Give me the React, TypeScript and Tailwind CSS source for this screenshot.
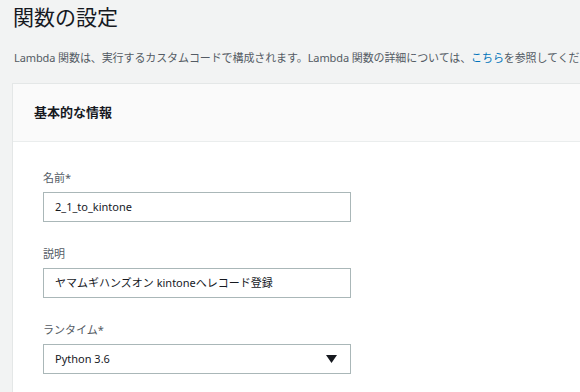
import React from "react";

const font = { fontFamily: '"Noto Sans", "Noto Sans CJK JP", sans-serif' };

function Label({ children }: { children: React.ReactNode }) {
  return <div className="h-[16px] leading-[16px] text-[11px] text-[#545b64]">{children}</div>;
}

function Field({ children, select }: { children: React.ReactNode; select?: boolean }) {
  return (
    <div className="mt-[6px] w-[308px] h-[30px] border border-[#aab7b8] bg-white flex items-center pl-[11px] pr-[13px] text-[11px] text-[#16191f]">
      <span className="flex-1">{children}</span>
      {select && (
        <svg width="11" height="8" viewBox="0 0 11 8">
          <path d="M0 0 H11 L5.5 8 Z" fill="#16191f" />
        </svg>
      )}
    </div>
  );
}

export default function App() {
  return (
    <div className="w-[580px] h-[392px] bg-[#f2f3f3] overflow-hidden" style={font}>
      <h1 className="pt-[3px] pl-[13px] text-[21px] leading-[28px] text-[#16191f] font-normal">関数の設定</h1>
      <p className="mt-[19px] pl-[14px] text-[11px] leading-[16px] text-[#545b64] whitespace-nowrap tracking-[-0.1px]">
        Lambda 関数は、実行するカスタムコードで構成されます。Lambda 関数の詳細については、
        <span className="text-[#0073bb]">こちら</span>を参照してください。
      </p>
      <div className="mt-[17px] ml-[12px] w-[600px] border-l border-t border-[#e4e7e7] bg-white h-[400px]">
        <div className="h-[58px] bg-[#fafafa] border-b border-[#eaeded] flex items-center pl-[21px]">
          <span className="text-[13px] font-bold text-[#16191f]">基本的な情報</span>
        </div>
        <div className="pt-[28px] pl-[30px]">
          <Label>名前*</Label>
          <Field>2_1_to_kintone</Field>
          <div className="mt-[24px]">
            <Label>説明</Label>
          </div>
          <Field>ヤマムギハンズオン kintoneへレコード登録</Field>
          <div className="mt-[24px]">
            <Label>ランタイム*</Label>
          </div>
          <Field select>Python 3.6</Field>
        </div>
      </div>
    </div>
  );
}
